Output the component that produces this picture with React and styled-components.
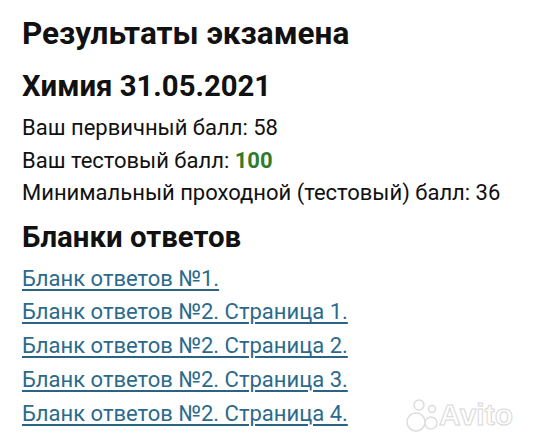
import React from 'react'
import styled, { createGlobalStyle } from 'styled-components'

const GlobalStyle = createGlobalStyle`
  html, body {
    margin: 0;
    padding: 0;
    background: #fff;
  }
  body {
    font-family: Roboto, "Noto Sans", "Liberation Sans", sans-serif;
    color: #111;
  }
`

const links = [
  'Бланк ответов №1.',
  'Бланк ответов №2. Страница 1.',
  'Бланк ответов №2. Страница 2.',
  'Бланк ответов №2. Страница 3.',
  'Бланк ответов №2. Страница 4.',
]

export default function App() {
  return (
    <>
      <GlobalStyle />
      <Page>
        <Title>Результаты экзамена</Title>
        <Subject>Химия 31.05.2021</Subject>
        <Info>
          <Line>Ваш первичный балл: 58</Line>
          <Line>Ваш тестовый балл: <Score>100</Score></Line>
          <Line>Минимальный проходной (тестовый) балл: 36</Line>
        </Info>
        <Section>Бланки ответов</Section>
        <LinkList>
          {links.map((text) => (
            <LinkItem key={text}>
              <Blank href="#">{text}</Blank>
            </LinkItem>
          ))}
        </LinkList>
        <Watermark>
          <svg width="34" height="36" viewBox="0 0 34 36">
            <circle cx="11" cy="25" r="9" fill="#fff" stroke="#ddd" strokeWidth="1.5" />
            <circle cx="26" cy="26" r="6" fill="#fff" stroke="#ddd" strokeWidth="1.5" />
            <circle cx="14" cy="8" r="5" fill="#fff" stroke="#ddd" strokeWidth="1.5" />
            <circle cx="27" cy="12" r="3.5" fill="#fff" stroke="#ddd" strokeWidth="1.5" />
          </svg>
          <WatermarkText>Avito</WatermarkText>
        </Watermark>
      </Page>
    </>
  )
}

const Page = styled.div`
  position: relative;
  width: 535px;
  height: 441px;
  box-sizing: border-box;
  padding: 16px 0 0 22px;
  overflow: hidden;
`
const Title = styled.h1`
  margin: 0;
  font-size: 31.5px;
  line-height: 36px;
  font-weight: 700;
`
const Subject = styled.h2`
  margin: 17px 0 0;
  font-size: 29.3px;
  line-height: 34px;
  font-weight: 700;
`
const Info = styled.div`
  margin-top: 9px;
  display: flex;
  flex-direction: column;
`
const Line = styled.div`
  font-size: 22px;
  line-height: 32.5px;
`
const Score = styled.b`
  color: #2f7d2a;
  font-weight: 700;
`
const Section = styled.h3`
  margin: 10px 0 0;
  font-size: 29.4px;
  line-height: 34px;
  font-weight: 700;
`
const LinkList = styled.ul`
  list-style: none;
  margin: 8px 0 0;
  padding: 0;
`
const LinkItem = styled.li`
  font-size: 22px;
  line-height: 33.8px;
`
const Blank = styled.a`
  color: #2b6a8c;
  text-decoration: underline;
  text-decoration-color: #2a6383;
  text-decoration-thickness: 2px;
  text-underline-offset: 3px;
`
const Watermark = styled.div`
  position: absolute;
  right: 22px;
  bottom: 8px;
  display: flex;
  align-items: center;
`
const WatermarkText = styled.span`
  font-family: "Liberation Sans", Arial, sans-serif;
  font-size: 30px;
  font-weight: 700;
  color: #fff;
  -webkit-text-stroke: 1px #d8d8d8;
`
